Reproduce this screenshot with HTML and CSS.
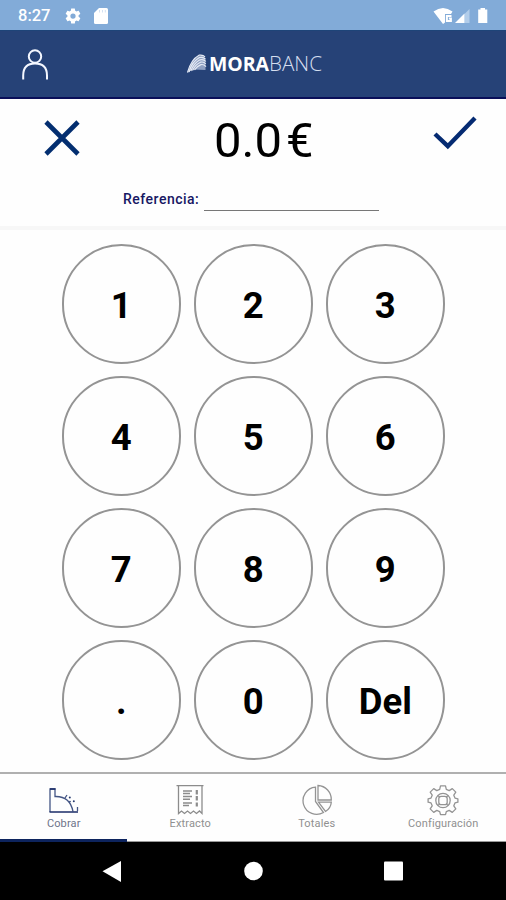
FILE: index.html
```html
<!DOCTYPE html>
<html lang="es">
<head>
<meta charset="utf-8">
<title>MoraBanc</title>
<link rel="stylesheet" href="styles.css">
</head>
<body>
<div class="status">
  <span class="clock">8:27</span>
  <svg class="s-gear" width="18" height="18" viewBox="0 0 24 24"><path fill="#fff" d="M19.43 12.98c.04-.32.07-.64.07-.98s-.03-.66-.07-.98l2.11-1.65c.19-.15.24-.42.12-.64l-2-3.46c-.12-.22-.39-.3-.61-.22l-2.49 1c-.52-.4-1.08-.73-1.69-.98l-.38-2.65C14.46 2.18 14.25 2 14 2h-4c-.25 0-.46.18-.49.42l-.38 2.65c-.61.25-1.17.59-1.69.98l-2.49-1c-.23-.09-.49 0-.61.22l-2 3.46c-.13.22-.07.49.12.64l2.11 1.65c-.04.32-.07.65-.07.98s.03.66.07.98l-2.11 1.65c-.19.15-.24.42-.12.64l2 3.46c.12.22.39.3.61.22l2.49-1c.52.4 1.08.73 1.69.98l.38 2.65c.03.24.24.42.49.42h4c.25 0 .46-.18.49-.42l.38-2.65c.61-.25 1.17-.59 1.69-.98l2.49 1c.23.09.49 0 .61-.22l2-3.46c.12-.22.07-.49-.12-.64l-2.11-1.65zM12 15.500a3.500 3.500 0 1 1 0-7 3.500 3.500 0 0 1 0 7z"/></svg>
  <svg class="s-card" width="14" height="16" viewBox="0 0 14 16"><path fill="#fff" d="M5 0h7.500q1.500 0 1.500 1.500v13q0 1.500-1.500 1.500h-11q-1.500 0-1.500-1.500V5z"/><path stroke="#d3e1f2" stroke-width="1" d="M5.500 2v2.500M8.500 2v2.500M11.300 2v2.500"/></svg>
  <svg class="s-right" width="58" height="18" viewBox="0 0 58 18"><path fill="#fff" d="M.5 4.500Q10-2.500 19.500 4.500L18 7h-6v8.500L10 17z"/><path fill="none" stroke="#fff" stroke-width="2" d="M18.500 9h-4.600v5h4v-2.500h-2"/><path fill="#b2cdea" d="M36.500 2v14h-5V7z"/><path fill="#fff" d="M31.500 6.500V16H22z"/><path fill="#fff" d="M47.500 1h4.500v1.500h2.300V16H45.200V2.500h2.300z"/></svg>
</div>
<header class="bar">
  <svg class="user" width="28" height="34" viewBox="0 0 28 34"><g fill="none" stroke="#f4f7ff" stroke-width="2"><circle cx="14" cy="8.500" r="6.200"/><path d="M2.200 31.500v-4C2.200 19 7 15.500 14 15.500S26 19 26 27.500v4"/></g></svg>
  <svg class="logo" width="136" height="26" viewBox="0 0 136 26">
    <path fill="#8fa0c2" d="M1.500 22Q5 9 13 4.700q5-.7 6.500 4V19L8 18.500Q4 19 1.500 22z"/>
    <g fill="none" stroke="#e6ebf5" stroke-width="1.200"><path d="M1.500 21.500Q5 8.500 13 4.200q4-.7 6 1.600"/><path d="M3 21Q6 10.500 13.500 6.500q4-.8 6 1.600"/><path d="M4.800 20Q8 12 14 8.800q4-.8 5.800 1.700"/><path d="M6.500 19.500Q9.500 13.500 14.500 11.200q3.500-.8 5.300 1.800"/><path d="M8.500 19Q11 15 15 13.600q3-.5 5 2"/></g>
    <text class="mora" x="23" y="20" textLength="60" lengthAdjust="spacingAndGlyphs">MORA</text>
    <text class="banc" x="83" y="20" textLength="53" lengthAdjust="spacingAndGlyphs">BANC</text>
  </svg>
</header>
<section class="panel">
  <div class="amount-row">
    <svg class="cancel" width="36" height="36" viewBox="0 0 36 36"><path stroke="#032e70" stroke-width="4.600" d="M2 2l32 32M34 2L2 34"/></svg>
    <div class="amount"><span>0.0</span><span class="euro">€</span></div>
    <svg class="ok" width="44" height="34" viewBox="0 0 44 34"><path fill="none" stroke="#052b72" stroke-width="4.400" d="M2 18l12.800 12.200L42 2"/></svg>
  </div>
  <div class="ref-row"><label>Referencia:</label><span class="line"></span></div>
</section>
<main class="pad">
  <button>1</button><button>2</button><button>3</button>
  <button>4</button><button>5</button><button>6</button>
  <button>7</button><button>8</button><button>9</button>
  <button>.</button><button>0</button><button>Del</button>
</main>
<nav class="tabs">
  <div class="tab active">
    <svg width="32" height="32" viewBox="0 0 32 32"><g fill="none" stroke="#435584" stroke-width="1.300"><path d="M2 28V5h5v7.500Q22 12 25 27.500"/><path stroke="#1b2d68" stroke-width="1.600" d="M1.500 28H30M2 5h5.500"/><path d="M29.500 27v-4M17 14l2-3"/></g><g fill="#26396f"><circle cx="21.800" cy="13.500" r="1"/><circle cx="25.800" cy="17.300" r="1"/><circle cx="22" cy="17.500" r=".8"/></g></svg>
    <span>Cobrar</span>
  </div>
  <div class="tab">
    <svg width="32" height="32" viewBox="0 0 32 32"><g fill="none" stroke="#8c8c8c" stroke-width="1.300"><path d="M2.500 1.700h27M4.500 2v27.500l3-2.500 3 2.500 3-2.500 3 2.500 3-2.500 3 2.500 3-2.500 2.500 2.500V2"/><path stroke-width="1.500" d="M9 7h9M9 9.500h7M9 12.500h9M9 15.300h7M9 19h9M9 21.500h6"/><path stroke-width="2.200" d="M22.800 6v4.500M22.800 12v4.500M22.800 18.500v4"/></g></svg>
    <span>Extracto</span>
  </div>
  <div class="tab">
    <svg width="32" height="32" viewBox="0 0 32 32"><g fill="none" stroke="#949494" stroke-width="1.300"><path d="M14.500 3.200A13.600 13.600 0 1 0 22.500 28.500L14.500 17.500z"/><path d="M17 1.500V16h13.300A14 14 0 0 0 17 1.500z"/><path d="M17.500 18.200h12.800q-.5 6-5.800 9.300z"/></g></svg>
    <span>Totales</span>
  </div>
  <div class="tab">
    <svg width="32" height="32" viewBox="0 0 32 32"><g fill="none" stroke="#949494" stroke-width="1.300" stroke-linejoin="round"><path d="M13.500 1.800h5l.8 3.600 2.900 1.200 3.100-2 3.500 3.500-2 3.100 1.200 2.900 2.900.7v3.400l-2.900.7-1.200 2.900 2 3.100-3.500 3.500-3.100-2-2.900 1.200-.8 3.100h-5l-.8-3.100-2.900-1.200-3.100 2-3.500-3.500 2-3.100L4 18.900l-2.900-.7v-3.400l2.900-.7 1.200-2.900-2-3.100 3.500-3.500 3.100 2 2.900-1.200z"/><circle cx="16" cy="16.500" r="7.200"/><rect x="11.800" y="12.300" width="8.400" height="8.400" rx="2.500"/><path d="M11 11.500l1.800 1.800M21 11.500l-1.800 1.800M11 21.500l1.800-1.800M21 21.500l-1.800-1.800"/></g></svg>
    <span>Configuración</span>
  </div>
</nav>
<footer class="system">
  <svg width="506" height="58" viewBox="0 0 506 58"><g fill="#fff"><path d="M121 19v21L102.500 29.300z"/><circle cx="253.500" cy="29" r="9.300"/><rect x="384" y="19.500" width="19" height="19" rx="1"/></g></svg>
</footer>
</body>
</html>
```
FILE: styles.css
```css
* { box-sizing: border-box; }
body {
  margin: 0;
  width: 506px;
  height: 900px;
  overflow: hidden;
  display: flex;
  flex-direction: column;
  background: #fefefe;
  font-family: Roboto, sans-serif;
}
svg { display: block; flex: none; }
.status {
  height: 30px;
  display: flex;
  align-items: center;
  padding: 1px 15px 0 18px;
  background: #82abd8;
}
.clock { width: 46px; font-size: 16.500px; font-weight: 500; color: #fff; }
.s-card { margin-left: 12px; }
.s-right { margin-left: auto; }
.bar {
  height: 69px;
  display: flex;
  padding-left: 21px;
  background: #264277;
  border-top: 1px solid #1e4478;
  border-bottom: 2px solid #0a0f59;
}
.user { margin-top: 17px; }
.logo { margin: 20px 0 0 137px; }
.mora, .banc { font-family: "Open Sans", sans-serif; font-size: 19.500px; }
.mora { fill: #fff; font-weight: 700; }
.banc { fill: #d5deef; font-weight: 300; }
.panel { height: 131px; border-bottom: 4px solid #f7f7f7; }
.amount-row { height: 84px; display: flex; }
.cancel { margin: 21px 0 0 44px; }
.amount {
  display: flex;
  width: 98px;
  margin: 12px 0 0 134px;
  font-size: 49px;
  line-height: 60px;
  color: #000;
}
.euro { margin-left: 4px; }
.ok { margin: 17px 0 0 121px; }
.ref-row { display: flex; padding-left: 123px; height: 29px; }
.ref-row label { width: 81px; padding-top: 6px; font-size: 14px; line-height: 20px; font-weight: 500; letter-spacing: .5px; color: #171763; }
.line { width: 175px; height: 28px; border-bottom: 1.500px solid #777; }
.pad {
  height: 542px;
  display: grid;
  grid-template-columns: repeat(3, 119.500px);
  grid-auto-rows: 119.500px;
  gap: 12.500px;
  padding: 14px 0 0 61.500px;
}
.pad button {
  padding: 4px 0 0;
  border: 2px solid #949494;
  border-radius: 50%;
  background: transparent;
  font: 700 36.500px Roboto, sans-serif;
  color: #000;
}
.tabs { height: 70px; display: grid; grid-template-columns: repeat(4, 1fr); border-top: 2px solid #b0b0b0; }
.tab {
  display: flex;
  flex-direction: column;
  align-items: center;
  padding: 10px 0 0 1px;
  border-bottom: 1px solid #999;
  color: #909090;
  font-size: 11px;
}
.tab span { line-height: 15px; letter-spacing: .15px; }
.tab.active { border-bottom: 3px solid #0d245e; color: #6e748a; }
.system { height: 58px; background: #000; }
```
